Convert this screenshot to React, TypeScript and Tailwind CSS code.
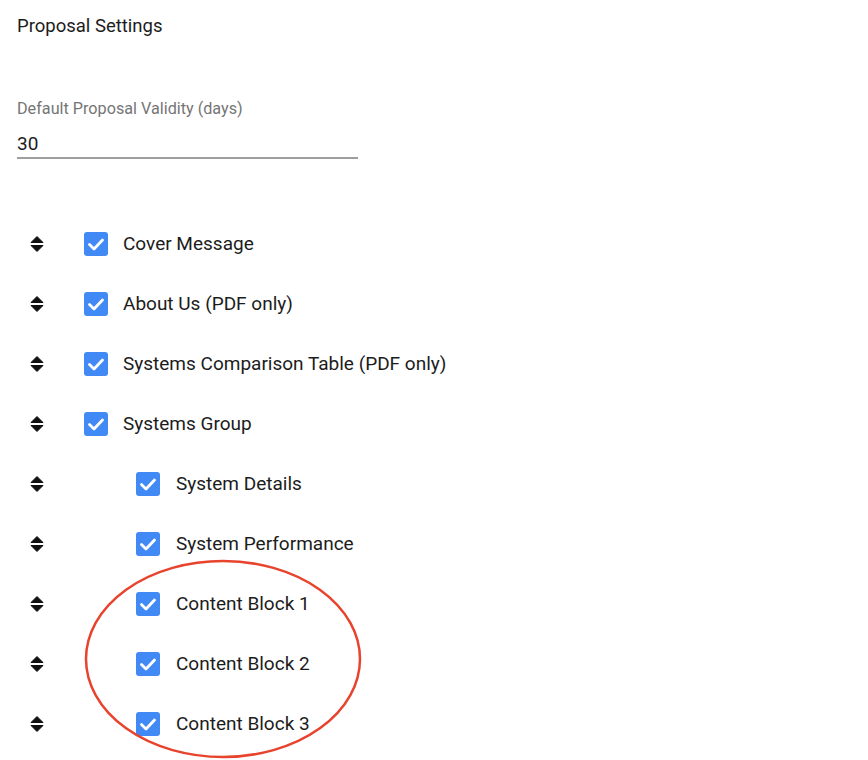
import React from 'react';

const items = [
    { label: 'Cover Message', nested: false },
    { label: 'About Us (PDF only)', nested: false },
    { label: 'Systems Comparison Table (PDF only)', nested: false },
    { label: 'Systems Group', nested: false },
    { label: 'System Details', nested: true },
    { label: 'System Performance', nested: true },
    { label: 'Content Block 1', nested: true },
    { label: 'Content Block 2', nested: true },
    { label: 'Content Block 3', nested: true },
];

function SortIcon() {
    return (
        <svg width="14" height="18" viewBox="0 0 14 18" className="block">
            <path d="M7 1.5 L13 7.5 H1 Z" fill="#111" strokeLinejoin="round" stroke="#111" strokeWidth="1" />
            <path d="M7 16.5 L13 10.5 H1 Z" fill="#111" strokeLinejoin="round" stroke="#111" strokeWidth="1" />
        </svg>
    );
}

function Checkbox() {
    return (
        <div className="w-[24px] h-[24px] rounded-[3px] bg-[#4189f5] flex items-center justify-center shrink-0">
            <svg width="24" height="24" viewBox="0 0 24 24">
                <path d="M5.5 12.5 L10 17 L18.5 8" fill="none" stroke="#fff" strokeWidth="2.8" strokeLinecap="round" strokeLinejoin="round" />
            </svg>
        </div>
    );
}

export default function App() {
    return (
        <div className="relative w-[868px] h-[760px] bg-white overflow-hidden text-[#1c1c1c]" style={{ fontFamily: 'Roboto, "Liberation Sans", sans-serif' }}>
            <div className="pl-[17px] pt-[15px]">
                <h1 className="text-[18.5px] leading-[22px]">Proposal Settings</h1>
                <div className="mt-[62px] w-[341px]">
                    <label className="block text-[16.2px] leading-[20px] text-[#757575]">Default Proposal Validity (days)</label>
                    <div className="mt-[13px] text-[19px] leading-[24px] pb-[1px] border-b-2 border-[#9e9e9e]">30</div>
                </div>
            </div>
            <div className="mt-[55px]">
                {items.map((item) => (
                    <div key={item.label} className="flex items-center h-[60px]">
                        <div className="ml-[30px] w-[14px]">
                            <SortIcon />
                        </div>
                        <div className={item.nested ? 'ml-[92px]' : 'ml-[40px]'}>
                            <Checkbox />
                        </div>
                        <span className={item.nested ? 'ml-[16px] text-[19px]' : 'ml-[15px] text-[19px]'}>{item.label}</span>
                    </div>
                ))}
            </div>
            <svg className="absolute left-0 top-0 pointer-events-none" width="868" height="760">
                <ellipse cx="223" cy="659" rx="137" ry="98" fill="none" stroke="#e8432d" strokeWidth="2.5" />
            </svg>
        </div>
    );
}
